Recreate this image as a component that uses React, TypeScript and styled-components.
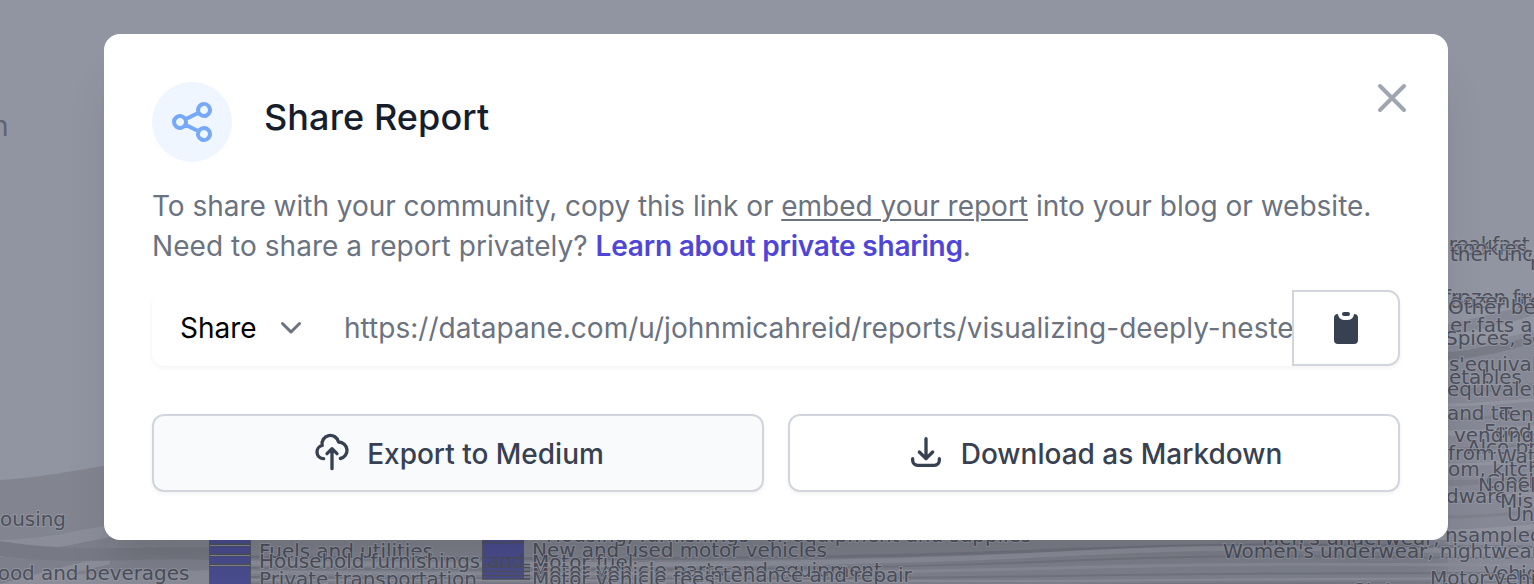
import React from "react";
import styled, { createGlobalStyle, css } from "styled-components";

const GlobalStyle = createGlobalStyle`
  *, *::before, *::after { box-sizing: border-box; }
  body { margin: 0; overflow: hidden; }
  button { font: inherit; color: inherit; }
`;

const Page = styled.div`
  position: relative;
  width: 1534px;
  height: 584px;
  overflow: hidden;
  padding: 34px 86px 0 104px;
  background: #9195a1;
  font-family: Inter, "Liberation Sans", sans-serif;
`;

const Backdrop = styled.svg`
  position: absolute;
  inset: 0;
  width: 100%;
  height: 100%;
`;

const ChartLabel = styled.text<{ $onNode?: boolean }>`
  font-family: "DejaVu Sans", sans-serif;
  font-size: 20px;
  letter-spacing: -0.06px;
  fill: #4d505c;
  stroke: ${(p) => (p.$onNode ? "#4b4e91" : "#9699a4")};
  stroke-opacity: 0.8;
  stroke-width: 2px;
  paint-order: stroke;
`;

const PageText = styled.text`
  font-family: Inter, sans-serif;
  font-size: 28px;
  fill: #60646f;
`;

const Modal = styled.section`
  position: relative;
  display: flex;
  flex-direction: column;
  height: 506px;
  padding: 48px;
  border-radius: 16px;
  background: #fff;
  box-shadow: 0 40px 50px -10px rgba(0, 0, 0, 0.1), 0 20px 20px -10px rgba(0, 0, 0, 0.04);
`;

const Header = styled.header`
  display: flex;
  height: 80px;
`;

const IconBadge = styled.div`
  display: flex;
  align-items: center;
  justify-content: center;
  width: 80px;
  height: 80px;
  border-radius: 50%;
  background: #eff6ff;
  color: #76a9fa;
`;

const Title = styled.h2`
  margin: 11px 0 0 32px;
  font-size: 36px;
  font-weight: 500;
  line-height: 48px;
  letter-spacing: 0.1px;
  color: #161e2e;
`;

const CloseButton = styled.button`
  display: flex;
  width: 48px;
  height: 48px;
  margin: -8px -16px 0 auto;
  padding: 0;
  border: 0;
  background: none;
  color: #9fa6b2;
`;

const Description = styled.p`
  margin: 24px 0 0;
  font-size: 28px;
  line-height: 40px;
  white-space: nowrap;
  color: #6b7280;
`;

const Lead = styled.span`
  letter-spacing: -0.03px;
`;

const EmbedLink = styled.a`
  text-decoration: underline;
  text-decoration-thickness: 2px;
  text-underline-offset: 3px;
`;

const Question = styled.span`
  letter-spacing: 0.05px;
`;

const PrivateLink = styled.a`
  font-weight: 600;
  letter-spacing: -0.2px;
  color: #4f46d8;
`;

const LinkRow = styled.div`
  display: flex;
  height: 76px;
  margin-top: 24px;
  border-radius: 12px;
  box-shadow: 0 2px 4px rgba(0, 0, 0, 0.05);
  font-size: 28px;
  line-height: 40px;
`;

const ModeSelect = styled.button`
  display: flex;
  align-items: center;
  gap: 14px;
  width: 192px;
  padding: 0 0 0 28px;
  border: 0;
  background: none;
  color: #000;
`;

const LinkField = styled.div`
  flex: 1;
  min-width: 0;
  overflow: hidden;
  padding-top: 18px;
  white-space: nowrap;
  letter-spacing: 0.03px;
  color: #6b7280;
`;

const CopyButton = styled.button`
  display: flex;
  align-items: center;
  justify-content: center;
  width: 108px;
  padding: 0;
  border: 2px solid #d2d6dc;
  border-radius: 0 12px 12px 0;
  background: #fff;
  color: #374151;
`;

const Actions = styled.div`
  display: grid;
  grid-template-columns: 1fr 1fr;
  gap: 24px;
  margin-top: 48px;
`;

const ActionButton = styled.button<{ $active?: boolean }>`
  display: flex;
  align-items: center;
  justify-content: center;
  gap: 15px;
  height: 78px;
  padding: 2px 0 0;
  border: 2px solid #d2d6dc;
  border-radius: 12px;
  background: #fff;
  box-shadow: 0 2px 4px rgba(0, 0, 0, 0.05);
  font-size: 28px;
  font-weight: 500;
  line-height: 40px;
  color: #374151;
  ${(p) => p.$active && css`background: #f9fafb;`}

  svg { margin-top: -4px; }
`;

const Icon = styled.svg<{ $size: number; $solid?: boolean; $stroke?: number }>`
  display: block;
  flex: none;
  width: ${(p) => p.$size}px;
  height: ${(p) => p.$size}px;
  fill: ${(p) => (p.$solid ? "currentColor" : "none")};
  stroke: ${(p) => (p.$solid ? "none" : "currentColor")};
  stroke-width: ${(p) => p.$stroke ?? 2};
  stroke-linecap: round;
  stroke-linejoin: round;
`;

type Label = [x: number, y: number, text: string, onNode?: boolean];

const labels: Label[] = [
  [-15, 526, "Housing"],
  [-13, 580, "Food and beverages"],
  [259, 558, "Fuels and utilities"],
  [259, 568, "Household furnishings"],
  [487, 568, "and", true],
  [259, 586, "Private transportation"],
  [546, 542, "Housing, furnishings"],
  [765, 542, "or equipment and supplies"],
  [532, 557, "New and used motor vehicles"],
  [532, 569, "Motor fuel"],
  [532, 577, "Motor vehicle parts and equipment"],
  [532, 582, "Motor vehicle maintenance and repair"],
  [532, 586, "Motor vehicle fees"],
  [1436, 251, "breakfast cereal"],
  [1452, 255, "cookies, fruit"],
  [1450, 261, "ther uncooked"],
  [1530, 270, "n"],
  [1444, 304, "frozen fruits"],
  [1450, 308, "dozen items"],
  [1448, 314, "Other beverages"],
  [1450, 332, "er fats and oils"],
  [1445, 345, "Spices, seasonings"],
  [1449, 371, "s'equivalent rent"],
  [1449, 384, "etables"],
  [1447, 396, "equivalent, and"],
  [1447, 420, "and te"],
  [1500, 421, "Tenants"],
  [1484, 438, "Food"],
  [1454, 442, "vending machines"],
  [1467, 454, "Alco prepared"],
  [1448, 460, "from"],
  [1497, 463, "Water"],
  [1448, 476, "om, kitchen"],
  [1486, 488, "Clocks"],
  [1478, 492, "Nonelectric"],
  [1446, 503, "dware"],
  [1500, 508, "Miscellaneous"],
  [1507, 521, "Unsampled"],
  [1262, 545, "Men's underwear,"],
  [1223, 558, "Women's underwear, nightwear"],
  [1445, 542, "nsampled"],
  [1484, 580, "Vehicle"],
  [1430, 585, "Motor vehicle"],
  [1353, 597, "State motor"],
];

const flows: { d: string; fill: string }[] = [
  { d: "M0 480C46 477 70 471 110 465V584H0Z", fill: "#82858f" },
  { d: "M0 540C50 539 85 528 112 525V584H0Z", fill: "#8b8e99" },
  { d: "M0 557C60 551 104 532 190 530L320 540V584H0Z", fill: "#7d808b" },
  { d: "M0 584C90 560 150 542 224 540V551C160 552 80 568 40 584Z", fill: "#8b8e99" },
  { d: "M110 540H1534V584H110Z", fill: "#7f828d" },
  { d: "M0 541C75 553 140 546 230 548V561C150 555 80 567 0 556Z", fill: "#777a85" },
  { d: "M0 584C70 570 130 574 230 569V584Z", fill: "#8b8e99" },
  { d: "M1448 324C1480 318 1510 308 1534 305V315C1500 326 1470 332 1448 334Z", fill: "#858894" },
  { d: "M1448 346C1478 344 1510 336 1534 331V584H1448Z", fill: "#868995" },
  { d: "M1448 352C1475 351 1500 342 1534 337V343C1500 353 1476 358 1448 360Z", fill: "#797c87" },
];

const strands: [y0: number, y1: number, color: string, width: number][] = [
  [557, 547, "#737682", 3],
  [563, 551, "#8d909b", 5],
  [568, 558, "#747782", 2],
  [572, 565, "#8a8d98", 3],
  [577, 573, "#737681", 2],
  [580, 578, "#8c8f9a", 2],
  [584, 582, "#767984", 2],
];

const sideStrands = [388, 402, 416, 430, 446, 462, 480, 496, 514, 529];
const firstNodes = [546, 556, 566];

function SankeyBackdrop() {
  return (
    <Backdrop viewBox="0 0 1534 584" aria-hidden="true">
      {flows.map((flow) => <path key={flow.d} d={flow.d} fill={flow.fill} />)}
      {strands.map(([y0, y1, color, width]) => (
        <path
          key={y0}
          d={`M250 ${y0}C620 ${y0 + 3} 850 ${y0 + 2} 1060 ${y1 + 3}S1350 ${y1} 1534 ${y1}`}
          fill="none"
          stroke={color}
          strokeWidth={width}
        />
      ))}
      {sideStrands.map((y, i) => (
        <path
          key={y}
          d={`M1440 ${y + 3}C1475 ${y + 4} 1500 ${y} 1534 ${y - 2}`}
          fill="none"
          stroke={i % 2 ? "#91949f" : "#7e818c"}
          strokeWidth={i % 3 ? 3 : 5}
        />
      ))}
      <rect x="209" y="535" width="42" height="49" fill="#4b4e91" />
      <rect x="482" y="535" width="42" height="44" fill="#4b4e91" />
      {firstNodes.map((y) => (
        <g key={y}>
          <path d={`M209 ${y - 1}H251`} stroke="#4f525d" strokeWidth="3" />
          <path d={`M209 ${y - 0.5}H251`} stroke="#858894" strokeWidth="1" />
        </g>
      ))}
      <path d="M209.5 540V584M250.5 540V584M482.5 540V579M523.5 540V579" stroke="#555865" />
      <path d="M482 542.5H524M482 557.5H524M482 564.5H530M482 567.5H530M482 571.5H530M482 575.5H530M482 579H530" stroke="#4f525e" strokeWidth="1.5" />
      {labels.map(([x, y, text, onNode]) => (
        <ChartLabel key={text} x={x} y={y} $onNode={onNode}>{text}</ChartLabel>
      ))}
      <PageText x="-8" y="136">n</PageText>
    </Backdrop>
  );
}

export default function App() {
  return (
    <>
      <GlobalStyle />
      <Page>
        <SankeyBackdrop />
        <Modal role="dialog" aria-labelledby="share-title">
          <Header>
            <IconBadge>
              <Icon $size={48} viewBox="0 0 24 24">
                <path d="M8.684 13.342C8.886 12.938 9 12.482 9 12c0-.482-.114-.938-.316-1.342m0 2.684a3 3 0 110-2.684m0 2.684l6.632 3.316m-6.632-6l6.632-3.316m0 0a3 3 0 105.367-2.684 3 3 0 00-5.367 2.684zm0 9.316a3 3 0 105.368 2.684 3 3 0 00-5.368-2.684z" />
              </Icon>
            </IconBadge>
            <Title id="share-title">Share Report</Title>
            <CloseButton aria-label="Close">
              <Icon $size={48} viewBox="0 0 24 24"><path d="M6 18L18 6M6 6l12 12" /></Icon>
            </CloseButton>
          </Header>
          <Description>
            <Lead>To share with your community, copy this link or </Lead>
            <EmbedLink>embed your report</EmbedLink> into your blog or website.
            <br />
            <Question>Need to share a report privately? </Question>
            <PrivateLink>Learn about private sharing</PrivateLink>.
          </Description>
          <LinkRow>
            <ModeSelect>
              Share
              <Icon $size={40} $stroke={1.5} viewBox="0 0 20 20" color="#6b7280">
                <path d="M5.75 7.75l4.25 4.25 4.25-4.25" />
              </Icon>
            </ModeSelect>
            <LinkField>https://datapane.com/u/johnmicahreid/reports/visualizing-deeply-nested</LinkField>
            <CopyButton aria-label="Copy link">
              <Icon $size={40} $solid viewBox="0 0 20 20">
                <path d="M8 3a1 1 0 011-1h2a1 1 0 110 2H9a1 1 0 01-1-1z" />
                <path d="M6 3a2 2 0 00-2 2v11a2 2 0 002 2h8a2 2 0 002-2V5a2 2 0 00-2-2 3 3 0 01-3 3H9a3 3 0 01-3-3z" />
              </Icon>
            </CopyButton>
          </LinkRow>
          <Actions>
            <ActionButton $active>
              <Icon $size={40} viewBox="0 0 24 24">
                <path d="M7 16a4 4 0 01-.88-7.903A5 5 0 1115.9 6L16 6a5 5 0 011 9.9M15 13l-3-3m0 0l-3 3m3-3v12" />
              </Icon>
              Export to Medium
            </ActionButton>
            <ActionButton>
              <Icon $size={40} viewBox="0 0 24 24">
                <path d="M4 16v1a3 3 0 003 3h10a3 3 0 003-3v-1m-4-4l-4 4m0 0l-4-4m4 4V4" />
              </Icon>
              Download as Markdown
            </ActionButton>
          </Actions>
        </Modal>
      </Page>
    </>
  );
}
